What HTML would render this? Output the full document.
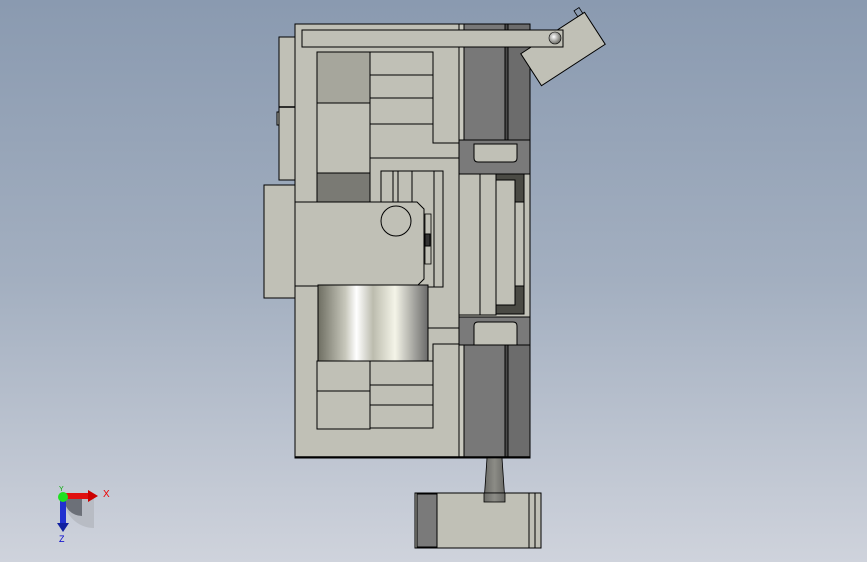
<!DOCTYPE html>
<html><head><meta charset="utf-8"><style>
html,body{margin:0;padding:0;width:867px;height:562px;overflow:hidden}
body{background:linear-gradient(#8a9ab0 0%,#a3afc0 50%,#cfd3dc 100%)}
svg{display:block}
</style></head><body>
<svg width="867" height="562" viewBox="0 0 867 562" xmlns="http://www.w3.org/2000/svg">
<defs>
<linearGradient id="cyl" x1="0" x2="1" y1="0" y2="0">
<stop offset="0" stop-color="#6e6e62"/><stop offset="0.25" stop-color="#c8c8bc"/><stop offset="0.35" stop-color="#ffffff"/><stop offset="0.5" stop-color="#bcbcae"/><stop offset="0.7" stop-color="#f4f4e8"/><stop offset="1" stop-color="#6a6a6a"/>
</linearGradient>
<radialGradient id="ball" cx="0.4" cy="0.4" r="0.6"><stop offset="0" stop-color="#fff"/><stop offset="1" stop-color="#6a6a64"/></radialGradient>
<linearGradient id="stem" x1="0" x2="1"><stop offset="0" stop-color="#6a6a66"/><stop offset="0.5" stop-color="#8c8c86"/><stop offset="1" stop-color="#6a6a66"/></linearGradient>
</defs>
<g stroke="#000" stroke-width="1" fill="#c0c0b6">
<rect x="279" y="37" width="16" height="143"/>
<line x1="279" y1="107" x2="295" y2="107" stroke-width="1.5"/>
<rect x="277" y="112" width="2" height="13"/>
<rect x="264" y="185" width="31" height="113"/>
<rect x="295" y="24" width="164" height="434"/>
<rect x="459" y="24" width="5" height="434" fill="#c8c8be"/>
<rect x="464" y="24" width="41" height="434" fill="#787878"/>
<rect x="505" y="24" width="3" height="434" fill="#4a4a4a"/>
<rect x="508" y="24" width="22" height="434" fill="#6c6c6c"/>
<rect x="317" y="52" width="53" height="51" fill="#a6a69c"/>
<rect x="317" y="103" width="53" height="70"/>
<rect x="317" y="173" width="53" height="29" fill="#7a7a74"/>
<rect x="370" y="52" width="63" height="23"/>
<rect x="370" y="75" width="63" height="23"/>
<rect x="370" y="98" width="63" height="26"/>
<polyline points="370,124 370,158 459,158" fill="none"/>
<polyline points="433,52 433,143 459,143" fill="none"/>
<rect x="381" y="171" width="62" height="116"/>
<line x1="393" y1="171" x2="393" y2="287"/>
<line x1="398" y1="171" x2="398" y2="287"/>
<line x1="412" y1="171" x2="412" y2="287"/>
<line x1="434" y1="171" x2="434" y2="287"/>
<rect x="459" y="140" width="71" height="34" fill="#7a7a7a"/>
<path d="M474,144 H517 V158 Q517,162 513,162 H478 Q474,162 474,158 Z" fill="#c0c0b6"/>
<rect x="459" y="174" width="71" height="143" fill="#c0c0b6"/>
<rect x="459" y="174" width="21" height="141"/>
<rect x="480" y="174" width="16" height="141"/>
<rect x="496" y="174" width="28" height="140" fill="#4a4a44"/>
<rect x="496" y="180" width="19" height="125"/>
<rect x="515" y="202" width="9" height="84"/>
<rect x="459" y="317" width="71" height="28" fill="#7a7a7a"/>
<path d="M478,322 H513 Q517,322 517,326 V345 H474 V326 Q474,322 478,322 Z" fill="#c0c0b6"/>
<path d="M295,202 H417 L424,209 V279 L417,286 H295 Z"/>
<circle cx="396" cy="221" r="15" fill="none"/>
<rect x="425" y="214" width="6" height="50" fill="none" stroke-width="0.8"/>
<rect x="425" y="234" width="5" height="12" fill="#333"/>
<rect x="318" y="285" width="110" height="76" fill="url(#cyl)"/>
<rect x="317" y="361" width="53" height="30"/>
<rect x="317" y="391" width="53" height="38"/>
<rect x="370" y="361" width="63" height="24"/>
<rect x="370" y="385" width="63" height="20"/>
<rect x="370" y="405" width="63" height="23"/>
<polyline points="433,361 433,344 459,344" fill="none"/>
<polyline points="428,328 459,328" fill="none"/>
<line x1="295" y1="457" x2="530" y2="457" stroke-width="1.5"/>
<g transform="translate(563,49) rotate(-33)">
<rect x="-38" y="-19" width="76" height="38"/>
<rect x="30" y="-26" width="6" height="7" fill="none" stroke-width="0.8"/>
</g>
<rect x="302" y="30" width="261" height="17"/>
<circle cx="555" cy="38" r="6" fill="url(#ball)" stroke-width="0.6"/>
<polygon points="487,458 502,458 505,502 484,502" fill="url(#stem)" stroke-width="0.8"/>
<rect x="415" y="493" width="126" height="55"/>
<rect x="417" y="494" width="20" height="53" fill="#7a7a7a"/>
<line x1="529" y1="493" x2="529" y2="548"/>
<line x1="535" y1="493" x2="535" y2="548"/>
<rect x="484" y="493" width="21" height="9" fill="url(#stem)" stroke-width="0.8"/>
</g>
<g>
<path d="M64,498 A30,30 0 0 0 94,528 V498 Z" fill="#b8bcc4"/>
<path d="M64,498 A18,18 0 0 0 82,516 V498 Z" fill="#6c7078"/>
<rect x="64" y="493" width="24" height="6" fill="#e01010"/>
<polygon points="88,490 98,496 88,502" fill="#c00"/>
<rect x="60" y="498" width="6" height="26" fill="#2030d0"/>
<polygon points="57,523 69,523 63,532" fill="#1020a0"/>
<circle cx="63" cy="497" r="5" fill="#20e020"/>
<text x="103" y="497" font-family="Liberation Sans,sans-serif" font-size="10" fill="#e00">X</text>
<text x="59" y="542" font-family="Liberation Sans,sans-serif" font-size="9" fill="#00c">Z</text>
<text x="59" y="491" font-family="Liberation Sans,sans-serif" font-size="7" fill="#0a0">Y</text>
</g>
</svg>
</body></html>
